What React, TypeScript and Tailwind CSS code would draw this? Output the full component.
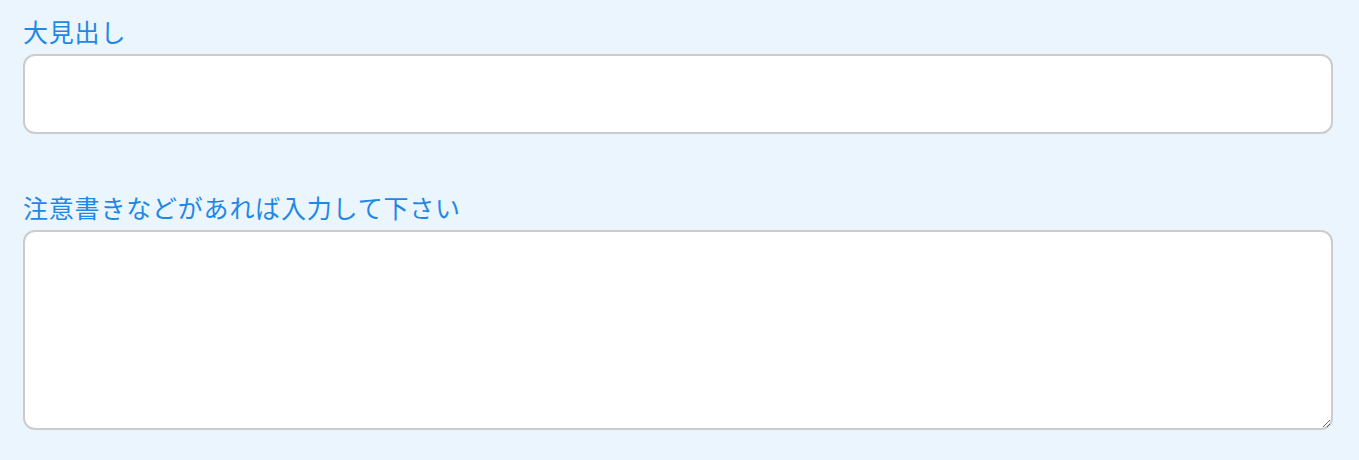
import React from "react";

export default function App() {
  const font = { fontFamily: '"Noto Sans CJK JP", "Noto Sans", sans-serif' };
  return (
    <div className="w-[1359px] h-[460px] bg-[#eaf5fe] pl-[23px] pr-[26px] pt-[14px]" style={font}>
      <label className="block text-[25px] leading-[34px] tracking-[0.8px] text-[#1e88e5]">大見出し</label>
      <input
        type="text"
        className="mt-[6px] block w-full h-[80px] rounded-[12px] border-2 border-[#cccccc] bg-white outline-none"
      />
      <label className="block mt-[56px] text-[25px] leading-[34px] tracking-[0.8px] text-[#1e88e5]">注意書きなどがあれば入力して下さい</label>
      <textarea
        className="mt-[6px] block w-full h-[200px] rounded-[12px] border-2 border-[#cccccc] bg-white outline-none resize-y"
      />
    </div>
  );
}
